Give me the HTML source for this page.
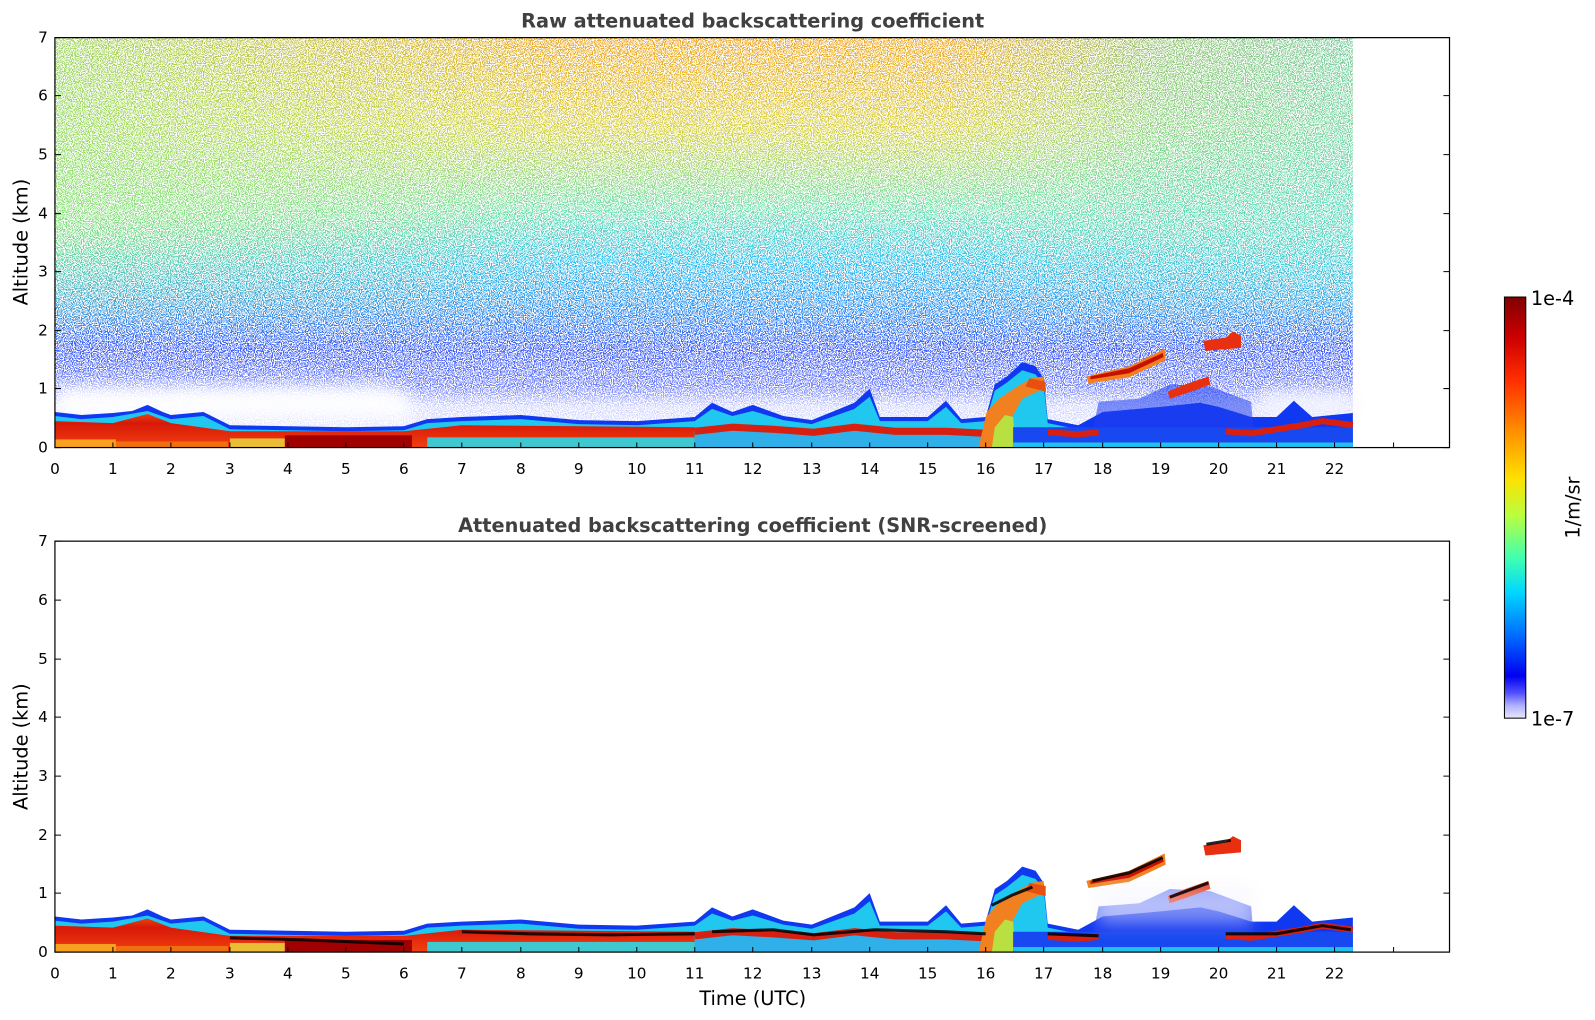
<!DOCTYPE html>
<html><head><meta charset="utf-8"><style>
html,body{margin:0;padding:0;background:#fff;width:1595px;height:1020px;overflow:hidden}
svg{display:block}
text{font-family:"DejaVu Sans","Liberation Sans",sans-serif;fill:#000}
.t{font-weight:bold;fill:#404040;font-size:19px}
.k{font-size:15px}
.l{font-size:19px}
</style></head><body>
<svg width="1595" height="1020" viewBox="0 0 1595 1020" xmlns="http://www.w3.org/2000/svg">
<defs>
<filter id="spk" x="0" y="0" width="100%" height="100%" filterUnits="objectBoundingBox">
 <feTurbulence type="fractalNoise" baseFrequency="0.9" numOctaves="1" seed="5" result="n"/>
 <feColorMatrix in="n" type="matrix" values="0 0 0 0 1  0 0 0 0 1  0 0 0 0 1  1.4 0 0 0 -0.2" result="w"/>
 <feComponentTransfer in="w" result="m"><feFuncA type="discrete" tableValues="0 0 0 0 0 1 1 1 1 1"/></feComponentTransfer>
 <feComposite in="m" in2="SourceGraphic" operator="over"/>
</filter>
<filter id="bl" x="-20%" y="-50%" width="140%" height="200%"><feGaussianBlur stdDeviation="8"/></filter>
<linearGradient id="vg" x1="0" y1="37" x2="0" y2="440" gradientUnits="userSpaceOnUse">
 <stop offset="0" stop-color="#f0a828"/>
 <stop offset="0.22" stop-color="#d8d040"/>
 <stop offset="0.42" stop-color="#70e0b0"/>
 <stop offset="0.55" stop-color="#30c0f0"/>
 <stop offset="0.66" stop-color="#3090f0"/>
 <stop offset="0.76" stop-color="#4060f8"/>
 <stop offset="0.85" stop-color="#7080ff"/>
 <stop offset="0.9" stop-color="#d0d4ff"/>
 <stop offset="1" stop-color="#e8e8ff"/>
</linearGradient>
<linearGradient id="hg" x1="54" y1="0" x2="1330" y2="0" gradientUnits="userSpaceOnUse">
 <stop offset="0" stop-color="#90e070" stop-opacity="0.85"/>
 <stop offset="0.28" stop-color="#a0e060" stop-opacity="0.3"/>
 <stop offset="0.4" stop-color="#a0e060" stop-opacity="0"/>
 <stop offset="0.68" stop-color="#80e0a0" stop-opacity="0"/>
 <stop offset="0.85" stop-color="#60d8b0" stop-opacity="0.6"/>
 <stop offset="1" stop-color="#60d8c0" stop-opacity="0.8"/>
</linearGradient>
<linearGradient id="hm" x1="0" y1="37" x2="0" y2="330" gradientUnits="userSpaceOnUse">
 <stop offset="0" stop-color="#fff"/>
 <stop offset="0.6" stop-color="#fff"/>
 <stop offset="1" stop-color="#000"/>
</linearGradient>
<mask id="fm"><rect x="0" y="0" width="1600" height="1020" fill="url(#hm)"/></mask>
<linearGradient id="cb" x1="0" y1="292" x2="0" y2="706" gradientUnits="userSpaceOnUse">
 <stop offset="0" stop-color="#800000"/>
 <stop offset="0.1" stop-color="#d00000"/>
 <stop offset="0.2" stop-color="#ff3000"/>
 <stop offset="0.32" stop-color="#ff9000"/>
 <stop offset="0.43" stop-color="#ffe000"/>
 <stop offset="0.52" stop-color="#b8ff40"/>
 <stop offset="0.62" stop-color="#40ffb0"/>
 <stop offset="0.7" stop-color="#00d8ff"/>
 <stop offset="0.8" stop-color="#0070ff"/>
 <stop offset="0.9" stop-color="#0000f0"/>
 <stop offset="0.94" stop-color="#5050ff"/>
 <stop offset="0.97" stop-color="#b0b0ff"/>
 <stop offset="1" stop-color="#e8e8ff"/>
</linearGradient>
<linearGradient id="rg" x1="0" y1="400" x2="0" y2="440" gradientUnits="userSpaceOnUse">
 <stop offset="0" stop-color="#f06010"/>
 <stop offset="0.4" stop-color="#d81808"/>
 <stop offset="1" stop-color="#f04010"/>
</linearGradient>
<g id="band">
 <path fill="#1038f0" d="M54,440 L54,405 L80,408 L111,406 L130,404 L145,398 L160,405 L168,408 L200,405 L226,418 L340,420 L397,419 L420,412 L454,410 L512,408 L569,413 L626,414 L683,410 L700,396 L720,405 L740,398 L770,409 L798,413 L840,396 L855,382 L865,410 L912,410 L930,394 L945,412 L969,410 L978,378 L990,370 L1005,356 L1018,360 L1026,372 L1030,412 L1060,418 L1084,405 L1141,400 L1180,396 L1198,400 L1230,410 L1255,410 L1272,394 L1290,410 L1330,406 L1330,440 Z"/>
 <path fill="#20c8f0" transform="translate(0,4)" d="M54,436 L54,405 L80,408 L111,406 L145,400 L168,408 L200,405 L226,418 L340,420 L397,419 L420,412 L454,410 L512,408 L569,413 L626,414 L683,410 L700,398 L720,405 L740,400 L770,409 L798,413 L840,398 L855,386 L865,410 L912,410 L930,396 L945,412 L969,410 L978,380 L990,372 L1005,360 L1018,364 L1026,374 L1030,412 L1060,418 L1330,418 L1330,436 Z"/>
 <path fill="url(#rg)" d="M54,440 L54,414 L111,416 L145,407 L168,416 L226,424 L397,424 L454,418 L683,420 L683,440 Z"/>
 <rect x="54" y="432" width="60" height="8" fill="#f8a020"/>
 <rect x="114" y="434" width="110" height="6" fill="#f07010"/>
 <rect x="226" y="431" width="80" height="9" fill="#e8e040" opacity="0.8"/>
 <rect x="280" y="428" width="125" height="12" fill="#a00000"/>
 <rect x="420" y="430" width="263" height="10" fill="#40c8d0"/>
 <rect x="683" y="422" width="286" height="18" fill="#30b0e8"/>
 <path fill="none" stroke="#d82010" stroke-width="7" d="M683,424 L720,420 L760,422 L800,425 L840,420 L880,424 L930,424 L969,426"/>
 <path fill="#f08020" d="M962,440 L970,405 L982,392 L1000,380 L1014,372 L1026,370 L1026,382 L1005,392 L995,410 L996,440 Z"/>
 <path fill="#b8e040" d="M975,440 L978,420 L988,408 L996,410 L998,440 Z"/>
 <rect x="996" y="420" width="334" height="20" fill="#1848f0"/>
 <rect x="996" y="435" width="334" height="5" fill="#20c0f0"/>
 <path fill="#2040f0" opacity="0.55" d="M1075,420 L1080,395 L1120,392 L1150,378 L1190,380 L1230,395 L1232,420 Z"/>
 <path fill="none" stroke="#d82010" stroke-width="6" d="M1030,425 L1060,427 L1080,425"/>
 <path fill="none" stroke="#d82010" stroke-width="6" d="M1205,424 L1230,426 L1255,422 L1280,418 L1300,414 L1330,418"/>
 <path fill="#f08020" d="M1068,370 L1110,360 L1145,343 L1146,354 L1110,371 L1070,377 Z"/>
 <path fill="#c81000" d="M1072,370 L1110,362 L1143,347 L1144,351 L1110,367 L1072,373 Z"/>
 <path fill="#e83010" d="M1183,335 L1205,332 L1212,326 L1220,330 L1220,342 L1185,345 Z"/>
 <path fill="#e83010" d="M1148,385 L1165,378 L1188,370 L1190,378 L1165,387 L1150,392 Z"/>
 <path fill="#e85010" d="M1028,375 L1012,372 L1008,380 L1028,385 Z"/>
</g>
</defs>
<g transform="scale(1.0172)">
<!-- top plot noise -->
<g filter="url(#spk)">
 <rect x="54" y="37" width="1276" height="403" fill="url(#vg)"/>
 <rect x="54" y="37" width="1276" height="300" fill="url(#hg)" mask="url(#fm)"/>
</g>
<path d="M54,380 L380,378 L405,390 L405,412 L54,412 Z" fill="#fff" filter="url(#bl)" opacity="0.95"/>
<rect x="1240" y="384" width="90" height="24" fill="#f4f4ff" filter="url(#bl)" opacity="0.85"/>
<use href="#band"/>
<!-- bottom plot -->
<use href="#band" transform="translate(0,496)"/>
<rect x="1080" y="872" width="150" height="36" fill="#f0f0ff" opacity="0.45" filter="url(#bl)"/>
<g fill="none" stroke="#000" stroke-width="3" opacity="0.85">
 <path d="M226,922 L300,924 L397,928"/>
 <path d="M454,916 L520,918 L600,919 L683,918"/>
 <path d="M700,916 L760,914 L800,919 L860,914 L930,916 L969,918"/>
 <path d="M975,890 L995,880 L1015,872"/>
 <path d="M1030,918 L1080,920"/>
 <path d="M1074,866 L1110,858 L1143,843"/>
 <path d="M1150,882 L1188,868"/>
 <path d="M1186,830 L1210,826"/>
 <path d="M1205,918 L1255,918 L1300,910 L1328,914"/>
</g>
<!-- axes -->
<g fill="none" stroke="#000" stroke-width="1.2">
 <rect x="54" y="37" width="1371" height="403"/>
 <rect x="54" y="532" width="1371" height="404"/>
</g>
<g stroke="#000" stroke-width="1">
 <path d="M54,440h6M54,382h6M54,325h6M54,267h6M54,210h6M54,152h6M54,94h6M54,37h6 M1425,440h-6M1425,382h-6M1425,325h-6M1425,267h-6M1425,210h-6M1425,152h-6M1425,94h-6"/>
 <path d="M54,936h6M54,878h6M54,821h6M54,763h6M54,705h6M54,648h6M54,590h6M54,532h6 M1425,878h-6M1425,821h-6M1425,763h-6M1425,705h-6M1425,648h-6M1425,590h-6"/>
 <path d="M111,440v-5M168,440v-5M226,440v-5M283,440v-5M340,440v-5M397,440v-5M454,440v-5M512,440v-5M569,440v-5M626,440v-5M683,440v-5M740,440v-5M798,440v-5M855,440v-5M912,440v-5M969,440v-5M1026,440v-5M1084,440v-5M1141,440v-5M1198,440v-5M1255,440v-5M1312,440v-5M1370,440v-5"/>
 <path d="M111,936v-5M168,936v-5M226,936v-5M283,936v-5M340,936v-5M397,936v-5M454,936v-5M512,936v-5M569,936v-5M626,936v-5M683,936v-5M740,936v-5M798,936v-5M855,936v-5M912,936v-5M969,936v-5M1026,936v-5M1084,936v-5M1141,936v-5M1198,936v-5M1255,936v-5M1312,936v-5M1370,936v-5"/>
</g>
<text class="t" x="740" y="27" text-anchor="middle">Raw attenuated backscattering coefficient</text>
<text class="t" x="740" y="523" text-anchor="middle">Attenuated backscattering coefficient (SNR-screened)</text>
<g class="k" text-anchor="end">
 <text x="47" y="445">0</text><text x="47" y="387">1</text><text x="47" y="330">2</text><text x="47" y="272">3</text><text x="47" y="215">4</text><text x="47" y="157">5</text><text x="47" y="99">6</text><text x="47" y="42">7</text>
 <text x="47" y="941">0</text><text x="47" y="883">1</text><text x="47" y="826">2</text><text x="47" y="768">3</text><text x="47" y="710">4</text><text x="47" y="653">5</text><text x="47" y="595">6</text><text x="47" y="537">7</text>
</g>
<g class="k" text-anchor="middle">
 <text x="54" y="466">0</text><text x="111" y="466">1</text><text x="168" y="466">2</text><text x="226" y="466">3</text><text x="283" y="466">4</text><text x="340" y="466">5</text><text x="397" y="466">6</text><text x="454" y="466">7</text><text x="512" y="466">8</text><text x="569" y="466">9</text><text x="626" y="466">10</text><text x="683" y="466">11</text><text x="740" y="466">12</text><text x="798" y="466">13</text><text x="855" y="466">14</text><text x="912" y="466">15</text><text x="969" y="466">16</text><text x="1026" y="466">17</text><text x="1084" y="466">18</text><text x="1141" y="466">19</text><text x="1198" y="466">20</text><text x="1255" y="466">21</text><text x="1312" y="466">22</text>
 <text x="54" y="962">0</text><text x="111" y="962">1</text><text x="168" y="962">2</text><text x="226" y="962">3</text><text x="283" y="962">4</text><text x="340" y="962">5</text><text x="397" y="962">6</text><text x="454" y="962">7</text><text x="512" y="962">8</text><text x="569" y="962">9</text><text x="626" y="962">10</text><text x="683" y="962">11</text><text x="740" y="962">12</text><text x="798" y="962">13</text><text x="855" y="962">14</text><text x="912" y="962">15</text><text x="969" y="962">16</text><text x="1026" y="962">17</text><text x="1084" y="962">18</text><text x="1141" y="962">19</text><text x="1198" y="962">20</text><text x="1255" y="962">21</text><text x="1312" y="962">22</text>
</g>
<text class="l" x="740" y="988" text-anchor="middle">Time (UTC)</text>
<text class="l" transform="translate(27,238) rotate(-90)" text-anchor="middle">Altitude (km)</text>
<text class="l" transform="translate(27,734) rotate(-90)" text-anchor="middle">Altitude (km)</text>
<!-- colorbar -->
<rect x="1479" y="292" width="21" height="414" fill="url(#cb)" stroke="#000" stroke-width="1"/>
<text class="l" x="1505" y="300">1e-4</text>
<text class="l" x="1505" y="713">1e-7</text>
<text class="l" transform="translate(1553,499) rotate(-90)" text-anchor="middle">1/m/sr</text>
</g>
</svg>
</body></html>
